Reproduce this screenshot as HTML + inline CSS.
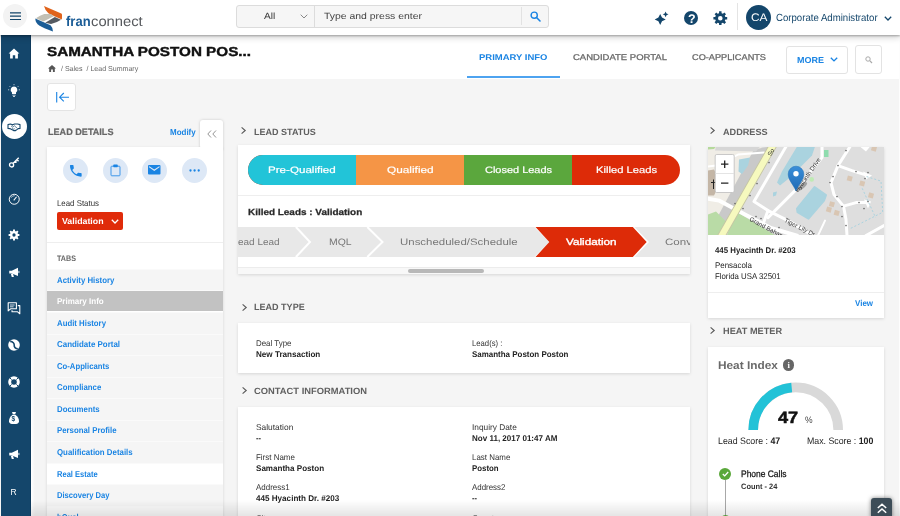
<!DOCTYPE html>
<html lang="en"><head><meta charset="utf-8"><title>Lead Summary</title>
<style>
*{box-sizing:border-box;margin:0;padding:0}
html,body{width:900px;height:516px;overflow:hidden;background:#f5f5f5;font-family:"Liberation Sans",sans-serif}
#app{position:relative;width:900px;height:516px;overflow:hidden;background:transparent;will-change:transform}
.a{position:absolute}
.t{position:absolute;white-space:nowrap;line-height:1;transform-origin:0 50%;display:block}
.card{position:absolute;background:#fff;box-shadow:0 1px 3px rgba(0,0,0,.13)}
svg{position:absolute;overflow:visible}
.circ{position:absolute;width:25px;height:25px;border-radius:50%;background:#dde8f6}
.li{position:absolute;left:47px;width:176px;height:21px;background:#f5f5f5;border-top:1px solid #fafafa}
</style></head>
<body><div id="app">
<div class="a" style="left:0;top:0;width:900px;height:35px;background:#fff;box-shadow:0 1px 2px rgba(0,0,0,.3),0 3px 6px rgba(0,0,0,.16);z-index:5"></div><div class="a" id="hdr" style="left:0;top:0;width:900px;height:35px;z-index:6"><div class="a" style="left:3px;top:4.2px;width:24px;height:24px;border-radius:50%;background:#f3f3f3"></div><svg style="left:9.7px;top:12.3px" width="12" height="9" viewBox="0 0 12 9"><path d="M0 .9H11M0 4.2H11M0 7.5H11" stroke="#14466b" stroke-width="1.2" fill="none"/></svg><svg style="left:34px;top:5px" width="30" height="28" viewBox="0 0 30 28">
<path d="M9.95 1L27.3 8.6Q28 9 28 10L27.95 14.4Q20 11.5 14.4 8.3Q11.3 5.8 9.95 1z" fill="#e0631b"/>
<path d="M1.9 13.25Q6 10.5 10.25 9.1L16.8 9.1L19.9 11.15L9.35 16.5z" fill="#c3c0b4"/>
<path d="M20.8 11.9L27 14.7Q23 17.5 17.1 19L11.2 17.8z" fill="#555a61"/>
<path d="M1.25 13.45L16.5 20.25Q18.5 22 18.95 26.45Q9 23 5.3 20.55Q1.5 18 1.25 13.45z" fill="#1a5c96"/>
</svg><span class="t" style="left:66.2px;top:13.66px;font-size:14px;color:#1a5c96;font-weight:700;transform:scaleX(0.9299) rotate(.03deg);">fran</span><span class="t" style="left:91.3px;top:13.66px;font-size:14px;color:#55585c;transform:scaleX(1.0541) rotate(.03deg);">connect</span><div class="a" style="left:235.5px;top:4.5px;width:313.5px;height:23px;border:1px solid #dcdcdc;border-radius:3px;background:#f6f6f6"></div><div class="a" style="left:313.5px;top:5px;width:1px;height:22px;background:#dcdcdc"></div><div class="a" style="left:520.5px;top:7px;width:1px;height:18px;background:#e2e2e2"></div><span class="t" style="left:264px;top:12.12px;font-size:9px;color:#333;transform:scaleX(1.1282) rotate(.03deg);">All</span><svg style="left:300px;top:14px" width="8" height="5" viewBox="0 0 8 5"><path d="M.7 .7L4 4L7.3 .7" stroke="#888" stroke-width="1" fill="none"/></svg><span class="t" style="left:324px;top:12.12px;font-size:9px;color:#444;transform:scaleX(1.1589) rotate(.03deg);">Type and press enter</span><svg style="left:529.5px;top:10.5px" width="11" height="11" viewBox="0 0 11 11"><circle cx="4.2" cy="4.2" r="3.1" stroke="#1a84e3" stroke-width="1.4" fill="none"/><path d="M6.5 6.5L10 10" stroke="#1a84e3" stroke-width="1.6" stroke-linecap="round"/></svg><svg style="left:655px;top:11px" width="14" height="14" viewBox="0 0 14 14"><path d="M5.2 2.9L7 6.6L10.7 8.4L7 10.2L5.2 13.9L3.4 10.2L-.3 8.4L3.4 6.6z" fill="#14466b"/><path d="M10.6 .4L11.5 2.4L13.5 3.3L11.5 4.2L10.6 6.2L9.7 4.2L7.7 3.3L9.7 2.4z" fill="#14466b"/></svg><div class="a" style="left:684.4px;top:11.2px;width:14px;height:14px;border-radius:50%;background:#14466b"></div><span class="t" style="left:687.9px;top:12.55px;font-size:12.5px;color:#fff;font-weight:700;transform:scaleX(1.0000) rotate(.03deg);">?</span><svg style="left:713px;top:11px" width="15" height="15" viewBox="0 0 15 15"><path d="M14.20 6.00 L14.20 8.40 L12.34 8.49 L11.78 9.85 L13.03 11.23 L11.33 12.93 L9.95 11.68 L8.59 12.24 L8.50 14.10 L6.10 14.10 L6.01 12.24 L4.65 11.68 L3.27 12.93 L1.57 11.23 L2.82 9.85 L2.26 8.49 L0.40 8.40 L0.40 6.00 L2.26 5.91 L2.82 4.55 L1.57 3.17 L3.27 1.47 L4.65 2.72 L6.01 2.16 L6.10 0.30 L8.50 0.30 L8.59 2.16 L9.95 2.72 L11.33 1.47 L13.03 3.17 L11.78 4.55 L12.34 5.91z M9.60 7.20 A2.3 2.3 0 1 0 5.00 7.20 A2.3 2.3 0 1 0 9.60 7.20z" fill="#14466b" fill-rule="evenodd"/></svg><div class="a" style="left:737px;top:3px;width:1px;height:27px;background:#e4e4e4"></div><div class="a" style="left:745.8px;top:4.6px;width:25.4px;height:25.4px;border-radius:50%;background:#14466b"></div><span class="t" style="left:750.5px;top:12.25px;font-size:11px;color:#fff;transform:scaleX(1.0798) rotate(.03deg);">CA</span><span class="t" style="left:776px;top:12.80px;font-size:10.3px;color:#14466b;transform:scaleX(0.9343) rotate(.03deg);">Corporate Administrator</span><svg style="left:884px;top:16px" width="8" height="5" viewBox="0 0 8 5"><path d="M.8 .8L4 4L7.2 .8" stroke="#14466b" stroke-width="1.3" fill="none"/></svg></div><div class="a" style="left:1px;top:35px;width:30px;height:481px;background:#14466b;border-right:1px solid #0f3a5c;z-index:3"></div><div class="a" style="left:31px;top:78px;width:4px;height:438px;background:linear-gradient(to right,#fff,rgba(255,255,255,0));z-index:2"></div><div class="a" id="side" style="left:0;top:0;width:31px;height:516px;z-index:4"><svg style="left:6.9px;top:46.5px" width="14" height="14" viewBox="0 0 14 14"><path d="M7 1.6L12.4 6.6H10.9V11.6H8.2V8.2H5.8V11.6H3.1V6.6H1.6z" fill="#fff"/></svg><svg style="left:6.9px;top:83.5px" width="14" height="14" viewBox="0 0 14 14"><path d="M7 2.4a3.4 3.4 0 0 1 2 6.1V10H5V8.5a3.4 3.4 0 0 1 2-6.1zM5.4 10.7H8.6V11.6H5.4zM6 12.2H8V12.9H6z" fill="#fff"/><path d="M7 .2V1.2M2.6 2.2L3.3 2.9M11.4 2.2L10.7 2.9M1.2 5.8H2.2M12.8 5.8H11.8" stroke="#fff" stroke-width=".8"/></svg><div class="a" style="left:1.6px;top:113.7px;width:25.2px;height:25.2px;border-radius:50%;background:#fff"></div><svg style="left:6.9px;top:119.5px" width="14" height="14" viewBox="0 0 14 14"><path d="M1 4.6L3.4 4L5.6 4.8L7.6 4L10.6 4L13 4.6V8.4L11.2 8.6L8.6 10.6L6.6 10.6L2.800 8.6L1 8.4z" fill="none" stroke="#14466b" stroke-width="1.1" stroke-linejoin="round"/><path d="M5.600 4.8L4.600 6.6L5.800 7.2L7.400 5.8L10.400 8.4M6.800 8.2L8.200 9.6M5.200 8.2L6.600 9.8" stroke="#14466b" stroke-width=".65" fill="none"/></svg><svg style="left:7.7px;top:156.2px" width="12.5" height="12.5" viewBox="0 0 14 14"><circle cx="4" cy="10" r="2.3" stroke="#fff" stroke-width="1.5" fill="none"/><path d="M5.6 8.4L12 2M10 4L11.8 5.8M8.2 5.8L9.6 7.2" stroke="#fff" stroke-width="1.5" fill="none"/></svg><svg style="left:7.7px;top:192.8px" width="12.5" height="12.5" viewBox="0 0 14 14"><circle cx="7" cy="7" r="5.6" stroke="#fff" stroke-width="1.1" fill="none"/><path d="M6.4 8.2L9.6 4.2" stroke="#fff" stroke-width="1.2"/><path d="M3.4 5.4A4 4 0 0 1 7.6 3" stroke="#fff" stroke-width=".7" fill="none"/></svg><svg style="left:7.9px;top:229.3px" width="12" height="12" viewBox="0 0 14 14"><path d="M13.30 5.90 L13.30 8.10 L11.65 8.19 L11.13 9.44 L12.24 10.68 L10.68 12.24 L9.44 11.13 L8.19 11.65 L8.10 13.30 L5.90 13.30 L5.81 11.65 L4.56 11.13 L3.32 12.24 L1.76 10.68 L2.87 9.44 L2.35 8.19 L0.70 8.10 L0.70 5.90 L2.35 5.81 L2.87 4.56 L1.76 3.32 L3.32 1.76 L4.56 2.87 L5.81 2.35 L5.90 0.70 L8.10 0.70 L8.19 2.35 L9.44 2.87 L10.68 1.76 L12.24 3.32 L11.13 4.56 L11.65 5.81z M8.90 7.00 A1.9 1.9 0 1 0 5.10 7.00 A1.9 1.9 0 1 0 8.90 7.00z" fill="#fff" fill-rule="evenodd"/></svg><svg style="left:7.7px;top:266.1px" width="12.5" height="12.5" viewBox="0 0 14 14"><path d="M1.4 5.2H4.2L11.2 2V11.2L4.2 8.4H1.4z" fill="#fff"/><path d="M3.2 8.6H5.6L6.6 12.2H4.2z" fill="#fff"/><path d="M12.2 5.4V8" stroke="#fff" stroke-width="1"/></svg><svg style="left:6.9px;top:301.0px" width="14" height="14" viewBox="0 0 14 14"><path d="M1.2 1.8H9.4V7.8H3.6L1.2 9.8z" fill="none" stroke="#fff" stroke-width="1.1" stroke-linejoin="round"/><path d="M10.8 4.6H12.8V12.8L10.6 10.8H5V9.2" fill="none" stroke="#fff" stroke-width="1.1" stroke-linejoin="round"/><path d="M3 4H7.6M3 5.8H6.6" stroke="#fff" stroke-width=".8"/></svg><svg style="left:6.9px;top:338.1px" width="14" height="14" viewBox="0 0 14 14"><circle cx="7" cy="7" r="5.8" fill="#fff"/><path d="M3.2 3.4C6 3.6 7.4 5.6 7.2 7.2C7 9 8.4 10.6 10.8 10.8" stroke="#14466b" stroke-width="1.6" fill="none"/></svg><svg style="left:6.9px;top:374.5px" width="14" height="14" viewBox="0 0 14 14"><circle cx="7" cy="7" r="4.3" stroke="#fff" stroke-width="3" fill="none"/><path d="M2.6 2.6L4.6 4.6M11.4 2.6L9.4 4.6M2.6 11.4L4.6 9.4M11.4 11.4L9.4 9.4" stroke="#14466b" stroke-width="1"/></svg><svg style="left:6.9px;top:410.6px" width="14" height="14" viewBox="0 0 14 14"><path d="M5 1H9L8.2 3.2H5.8z" fill="#fff"/><path d="M5.6 3.8H8.4C11 5.6 12 8 12 10.2C12 12.2 10.4 13 7 13C3.6 13 2 12.2 2 10.2C2 8 3 5.6 5.6 3.8z" fill="#fff"/></svg><span class="t" style="left:11.6px;top:416px;font-size:6.5px;font-weight:700;color:#14466b">$</span><svg style="left:7.7px;top:448.1px" width="12.5" height="12.5" viewBox="0 0 14 14"><path d="M1.4 5.2H4.2L11.2 2V11.2L4.2 8.4H1.4z" fill="#fff"/><path d="M3.2 8.6H5.6L6.6 12.2H4.2z" fill="#fff"/><path d="M12.2 5.4V8" stroke="#fff" stroke-width="1"/></svg><span class="t" style="left:10.6px;top:488px;font-size:8.5px;color:#fff">R</span></div><div class="a" style="left:31px;top:35px;width:869px;height:43.5px;background:#fff"></div><span class="t" style="left:47.3px;top:44.91px;font-size:13px;color:#111;font-weight:700;transform:scaleX(1.1719) rotate(.03deg);-webkit-text-stroke:.4px #111;">SAMANTHA POSTON POS...</span><svg style="left:48px;top:64.5px" width="8" height="7" viewBox="0 0 8 7"><path d="M4 0L8 3.6H6.8V7H4.9V4.6H3.1V7H1.2V3.6H0z" fill="#555"/></svg><span class="t" style="left:60.6px;top:65.40px;font-size:7.2px;color:#666;transform:scaleX(0.9809) rotate(.03deg);">/ Sales&nbsp; / Lead Summary</span><span class="t" style="left:479px;top:53.37px;font-size:8.4px;color:#1a84e3;font-weight:700;transform:scaleX(1.1322) rotate(.03deg);">PRIMARY INFO</span><div class="a" style="left:466.5px;top:76px;width:93.5px;height:2.2px;background:#4da3f0"></div><span class="t" style="left:572.5px;top:53.37px;font-size:8.4px;color:#666;transform:scaleX(1.1347) rotate(.03deg);-webkit-text-stroke:.25px #666;">CANDIDATE PORTAL</span><span class="t" style="left:692px;top:53.37px;font-size:8.4px;color:#666;transform:scaleX(1.0966) rotate(.03deg);-webkit-text-stroke:.25px #666;">CO-APPLICANTS</span><div class="a" style="left:786px;top:46px;width:62px;height:27.5px;border:1px solid #e3e3e3;border-radius:3px;background:#fff"></div><span class="t" style="left:797px;top:55.60px;font-size:8.6px;color:#1a84e3;font-weight:700;transform:scaleX(1.0473) rotate(.03deg);">MORE</span><svg style="left:830px;top:57.3px" width="8" height="5" viewBox="0 0 8 5"><path d="M.8 .8L4 3.9L7.2 .8" stroke="#1a84e3" stroke-width="1.4" fill="none"/></svg><div class="a" style="left:855px;top:45px;width:26.5px;height:28.5px;border:1px solid #e3e3e3;border-radius:3px;background:#fff"></div><svg style="left:864.5px;top:55.5px" width="8" height="8" viewBox="0 0 8 8"><circle cx="3" cy="3" r="2.2" stroke="#aaa" stroke-width="1" fill="none"/><path d="M4.7 4.7L7 7" stroke="#aaa" stroke-width="1.2"/></svg><div class="a" style="left:47px;top:83px;width:28.5px;height:28px;border:1px solid #e4e4e4;border-radius:3px;background:#fff"></div><svg style="left:55.5px;top:92px" width="14" height="11" viewBox="0 0 14 11"><path d="M.7 0V10.4M3.6 5.2H13M7.8 1L3.6 5.2L7.8 9.4" stroke="#1a84e3" stroke-width="1.1" fill="none"/></svg><div class="a" style="left:899px;top:36px;width:1px;height:480px;background:#fdfdfd"></div><span class="t" style="left:47.5px;top:128.06px;font-size:9.3px;color:#666;font-weight:700;transform:scaleX(0.9778) rotate(.03deg);-webkit-text-stroke:.2px #666;">LEAD DETAILS</span><span class="t" style="left:169.5px;top:128.00px;font-size:8.6px;color:#1a84e3;font-weight:700;transform:scaleX(0.9282) rotate(.03deg);">Modify</span><div class="a" style="left:200px;top:120px;width:23px;height:30px;background:#fff;border-radius:3px 3px 0 0;box-shadow:0 0 3px rgba(0,0,0,.18)"></div><div class="card" style="left:47px;top:147.3px;width:176px;height:380px"></div><div class="a" style="left:200.5px;top:145px;width:22.5px;height:6px;background:#fff"></div><svg style="left:206.5px;top:129.5px" width="10" height="8" viewBox="0 0 10 8"><path d="M4 .5L.8 4L4 7.5M9 .5L5.8 4L9 7.5" stroke="#888" stroke-width=".9" fill="none"/></svg><div class="circ" style="left:63.0px;top:157.7px"></div><div class="circ" style="left:102.7px;top:157.7px"></div><div class="circ" style="left:142.3px;top:157.7px"></div><div class="circ" style="left:182.0px;top:157.7px"></div><svg style="left:67.5px;top:162.5px" width="15.6" height="15.6" viewBox="0 0 24 24"><path d="M6.62 10.79c1.44 2.83 3.76 5.14 6.59 6.59l2.2-2.2c.27-.27.67-.36 1.02-.24 1.12.37 2.33.57 3.57.57.55 0 1 .45 1 1V20c0 .55-.45 1-1 1-9.39 0-17-7.61-17-17 0-.55.45-1 1-1h3.5c.55 0 1 .45 1 1 0 1.25.2 2.45.57 3.57.11.35.03.74-.25 1.02l-2.2 2.2z" fill="#1a84e3"/></svg><svg style="left:109.7px;top:164px" width="11" height="12.5" viewBox="0 0 11 12.5"><rect x="1" y="2.2" width="9" height="9.6" rx=".8" fill="none" stroke="#3d96ea" stroke-width="1"/><rect x="3.3" y=".6" width="4.4" height="2.6" rx=".6" fill="#1a84e3"/></svg><svg style="left:148.4px;top:165.2px" width="12.5" height="9.6" viewBox="0 0 12.5 9.6"><rect x="0" y="0" width="12.5" height="9.6" rx="1" fill="#1a84e3"/><path d="M1 1.6L6.25 5.3L11.5 1.6" stroke="#dde8f6" stroke-width="1.1" fill="none"/></svg><svg style="left:188.5px;top:168.8px" width="12" height="3" viewBox="0 0 12 3"><circle cx="1.5" cy="1.5" r="1.15" fill="#1a84e3"/><circle cx="5.6" cy="1.5" r="1.15" fill="#1a84e3"/><circle cx="9.7" cy="1.5" r="1.15" fill="#1a84e3"/></svg><span class="t" style="left:57.3px;top:199.17px;font-size:8.3px;color:#333;transform:scaleX(0.9481) rotate(.03deg);">Lead Status</span><div class="a" style="left:57.3px;top:212.2px;width:65.6px;height:17.5px;background:#e02b0a;border-radius:2px"></div><span class="t" style="left:62px;top:217.00px;font-size:8.6px;color:#fff;font-weight:700;transform:scaleX(1.0223) rotate(.03deg);">Validation</span><svg style="left:110.8px;top:218.6px" width="8" height="5" viewBox="0 0 8 5"><path d="M.8 .8L4 4L7.2 .8" stroke="#fff" stroke-width="1.3" fill="none"/></svg><div class="a" style="left:47px;top:242px;width:176px;height:1px;background:#eee"></div><span class="t" style="left:57.3px;top:254.95px;font-size:8px;color:#666;font-weight:700;transform:scaleX(0.8920) rotate(.03deg);">TABS</span><div class="li" style="top:268.90px;height:21.55px;background:#f5f5f5"></div><span class="t" style="left:57.3px;top:275.59px;font-size:8.5px;color:#1a84e3;font-weight:700;transform:scaleX(0.9205) rotate(.03deg);">Activity History</span><div class="li" style="top:290.45px;height:20.75px;background:#c2c2c2"></div><span class="t" style="left:57.3px;top:297.14px;font-size:8.5px;color:#fff;font-weight:700;transform:scaleX(0.9414) rotate(.03deg);">Primary Info</span><div class="li" style="top:312.00px;height:21.55px;background:#f5f5f5"></div><span class="t" style="left:57.3px;top:318.69px;font-size:8.5px;color:#1a84e3;font-weight:700;transform:scaleX(0.9180) rotate(.03deg);">Audit History</span><div class="li" style="top:333.55px;height:21.55px;background:#f5f5f5"></div><span class="t" style="left:57.3px;top:340.24px;font-size:8.5px;color:#1a84e3;font-weight:700;transform:scaleX(0.9327) rotate(.03deg);">Candidate Portal</span><div class="li" style="top:355.10px;height:21.55px;background:#f5f5f5"></div><span class="t" style="left:57.3px;top:361.79px;font-size:8.5px;color:#1a84e3;font-weight:700;transform:scaleX(0.9076) rotate(.03deg);">Co-Applicants</span><div class="li" style="top:376.65px;height:21.55px;background:#f5f5f5"></div><span class="t" style="left:57.3px;top:383.34px;font-size:8.5px;color:#1a84e3;font-weight:700;transform:scaleX(0.9193) rotate(.03deg);">Compliance</span><div class="li" style="top:398.20px;height:21.55px;background:#f5f5f5"></div><span class="t" style="left:57.3px;top:404.89px;font-size:8.5px;color:#1a84e3;font-weight:700;transform:scaleX(0.9223) rotate(.03deg);">Documents</span><div class="li" style="top:419.75px;height:21.55px;background:#f5f5f5"></div><span class="t" style="left:57.3px;top:426.44px;font-size:8.5px;color:#1a84e3;font-weight:700;transform:scaleX(0.9194) rotate(.03deg);">Personal Profile</span><div class="li" style="top:441.30px;height:21.55px;background:#f5f5f5"></div><span class="t" style="left:57.3px;top:447.99px;font-size:8.5px;color:#1a84e3;font-weight:700;transform:scaleX(0.9263) rotate(.03deg);">Qualification Details</span><div class="li" style="top:462.85px;height:21.55px;background:#fff"></div><span class="t" style="left:57.3px;top:469.54px;font-size:8.5px;color:#1a84e3;font-weight:700;transform:scaleX(0.8878) rotate(.03deg);">Real Estate</span><div class="li" style="top:484.40px;height:21.55px;background:#f5f5f5"></div><span class="t" style="left:57.3px;top:491.09px;font-size:8.5px;color:#1a84e3;font-weight:700;transform:scaleX(0.8960) rotate(.03deg);">Discovery Day</span><div class="li" style="top:505.95px;height:21.55px;background:#fbfbfb"></div><span class="t" style="left:57.3px;top:512.64px;font-size:8.5px;color:#1a84e3;font-weight:700;transform:scaleX(0.9006) rotate(.03deg);">bQual</span><svg style="left:240.5px;top:126.9px" width="5" height="7" viewBox="0 0 5 7"><path d="M.6 .4L4.2 3.5L.6 6.6" stroke="#5a5a5a" stroke-width="1.15" fill="none"/></svg><span class="t" style="left:253.5px;top:127.82px;font-size:9px;color:#606060;font-weight:700;transform:scaleX(1.0021) rotate(.03deg);">LEAD STATUS</span><div class="card" style="left:238px;top:145px;width:452px;height:129.2px"></div><div class="a" style="left:248px;top:155px;width:432.3px;height:29.7px;border-radius:15px;overflow:hidden;background:#dd2b08"><div class="a" style="left:0;top:0;width:108.2px;height:30px;background:#22c4d8"></div><div class="a" style="left:108.2px;top:0;width:107.7px;height:30px;background:#f59546"></div><div class="a" style="left:215.9px;top:0;width:108.1px;height:30px;background:#5ba73d"></div></div><span class="t" style="left:267.9px;top:166.46px;font-size:9.3px;color:#fff;transform:scaleX(1.2476) rotate(.03deg);-webkit-text-stroke:.2px #fff;">Pre-Qualified</span><span class="t" style="left:386.5px;top:166.46px;font-size:9.3px;color:#fff;transform:scaleX(1.2724) rotate(.03deg);-webkit-text-stroke:.2px #fff;">Qualified</span><span class="t" style="left:484.5px;top:166.46px;font-size:9.3px;color:#fff;transform:scaleX(1.1783) rotate(.03deg);-webkit-text-stroke:.2px #fff;">Closed Leads</span><span class="t" style="left:595.5px;top:166.46px;font-size:9.3px;color:#fff;transform:scaleX(1.2042) rotate(.03deg);-webkit-text-stroke:.2px #fff;">Killed Leads</span><div class="a" style="left:238px;top:194.8px;width:452px;height:1px;background:#eee"></div><span class="t" style="left:248.1px;top:207.90px;font-size:8.8px;color:#2a2a2a;font-weight:700;transform:scaleX(1.1286) rotate(.03deg);-webkit-text-stroke:.25px #2a2a2a;">Killed Leads : Validation</span><svg style="left:238px;top:227px" width="452" height="30" viewBox="0 0 452 30">
<rect x="0" y="0" width="452" height="30" fill="#e8e8e8"/>
<path d="M57.9 0L72 15L57.9 30M129.3 0L144.5 15L129.3 30" stroke="#fff" stroke-width="2" fill="none"/>
<path d="M295.3 -1L311.3 15L295.3 31L395.5 31L411 15L395.5 -1z" fill="#fff"/>
<path d="M297.5 0L311.3 15L297.5 30L394.8 30L408.7 15L394.8 0z" fill="#dd2b08"/>
</svg><span class="t" style="left:238px;top:238.46px;font-size:9.3px;color:#777;transform:scaleX(1.0727) rotate(.03deg);">ead Lead</span><span class="t" style="left:328.7px;top:238.46px;font-size:9.3px;color:#777;transform:scaleX(1.1212) rotate(.03deg);">MQL</span><span class="t" style="left:399.9px;top:238.46px;font-size:9.3px;color:#777;transform:scaleX(1.2308) rotate(.03deg);">Unscheduled/Schedule</span><span class="t" style="left:565.9px;top:238.46px;font-size:9.3px;color:#fff;transform:scaleX(1.2601) rotate(.03deg);-webkit-text-stroke:.35px #fff;">Validation</span><div class="a" style="left:665px;top:236px;width:25px;height:13px;overflow:hidden"><span class="t" style="left:0px;top:2.46px;font-size:9.3px;color:#777;transform:scaleX(1.2432) rotate(.03deg);">Conv</span></div><div class="a" style="left:238px;top:267.3px;width:452px;height:6.9px;background:#f8f8f8;border-top:1px solid #ececec"></div><div class="a" style="left:407.9px;top:269.4px;width:76.1px;height:4px;border-radius:2px;background:#b8b8b8"></div><svg style="left:241.7px;top:304.0px" width="5" height="7" viewBox="0 0 5 7"><path d="M.6 .4L4.2 3.5L.6 6.6" stroke="#5a5a5a" stroke-width="1.15" fill="none"/></svg><span class="t" style="left:254px;top:302.92px;font-size:9px;color:#606060;font-weight:700;transform:scaleX(1.0036) rotate(.03deg);">LEAD TYPE</span><div class="card" style="left:238px;top:323.3px;width:452px;height:50px"></div><span class="t" style="left:256.4px;top:338.67px;font-size:8.3px;color:#333;transform:scaleX(0.9538) rotate(.03deg);">Deal Type</span><span class="t" style="left:256.4px;top:350.07px;font-size:8.3px;color:#222;font-weight:700;transform:scaleX(0.9752) rotate(.03deg);">New Transaction</span><span class="t" style="left:471.8px;top:338.67px;font-size:8.3px;color:#333;transform:scaleX(0.9282) rotate(.03deg);">Lead(s) :</span><span class="t" style="left:471.8px;top:350.07px;font-size:8.3px;color:#222;font-weight:700;transform:scaleX(0.9592) rotate(.03deg);">Samantha Poston Poston</span><svg style="left:241.7px;top:386.9px" width="5" height="7" viewBox="0 0 5 7"><path d="M.6 .4L4.2 3.5L.6 6.6" stroke="#5a5a5a" stroke-width="1.15" fill="none"/></svg><span class="t" style="left:254px;top:386.52px;font-size:9px;color:#606060;font-weight:700;transform:scaleX(1.0400) rotate(.03deg);">CONTACT INFORMATION</span><div class="card" style="left:238px;top:406.8px;width:452px;height:120px"></div><span class="t" style="left:256.4px;top:422.67px;font-size:8.3px;color:#333;transform:scaleX(1.0107) rotate(.03deg);">Salutation</span><span class="t" style="left:256.4px;top:434.07px;font-size:8.3px;color:#222;font-weight:700;transform:scaleX(0.9040) rotate(.03deg);">--</span><span class="t" style="left:471.8px;top:422.67px;font-size:8.3px;color:#333;transform:scaleX(1.0015) rotate(.03deg);">Inquiry Date</span><span class="t" style="left:471.8px;top:434.07px;font-size:8.3px;color:#222;font-weight:700;transform:scaleX(0.9677) rotate(.03deg);">Nov 11, 2017 01:47 AM</span><span class="t" style="left:256.4px;top:452.97px;font-size:8.3px;color:#333;transform:scaleX(0.9586) rotate(.03deg);">First Name</span><span class="t" style="left:256.4px;top:464.37px;font-size:8.3px;color:#222;font-weight:700;transform:scaleX(0.9718) rotate(.03deg);">Samantha Poston</span><span class="t" style="left:471.8px;top:452.97px;font-size:8.3px;color:#333;transform:scaleX(0.9545) rotate(.03deg);">Last Name</span><span class="t" style="left:471.8px;top:464.37px;font-size:8.3px;color:#222;font-weight:700;transform:scaleX(0.9458) rotate(.03deg);">Poston</span><span class="t" style="left:256.4px;top:482.97px;font-size:8.3px;color:#333;transform:scaleX(0.9583) rotate(.03deg);">Address1</span><span class="t" style="left:256.4px;top:494.37px;font-size:8.3px;color:#222;font-weight:700;transform:scaleX(0.9762) rotate(.03deg);">445 Hyacinth Dr. #203</span><span class="t" style="left:471.8px;top:482.97px;font-size:8.3px;color:#333;transform:scaleX(0.9526) rotate(.03deg);">Address2</span><span class="t" style="left:471.8px;top:494.37px;font-size:8.3px;color:#222;font-weight:700;transform:scaleX(0.9040) rotate(.03deg);">--</span><span class="t" style="left:256.4px;top:513.87px;font-size:8.3px;color:#333;transform:scaleX(0.9443) rotate(.03deg);">City</span><span class="t" style="left:256.4px;top:525.27px;font-size:8.3px;color:#222;font-weight:700;transform:scaleX(0.9254) rotate(.03deg);">Pensacola</span><span class="t" style="left:471.8px;top:513.87px;font-size:8.3px;color:#333;transform:scaleX(0.9978) rotate(.03deg);">Country</span><span class="t" style="left:471.8px;top:525.27px;font-size:8.3px;color:#222;font-weight:700;transform:scaleX(0.9127) rotate(.03deg);">USA</span><svg style="left:710.1px;top:126.9px" width="5" height="7" viewBox="0 0 5 7"><path d="M.6 .4L4.2 3.5L.6 6.6" stroke="#5a5a5a" stroke-width="1.15" fill="none"/></svg><span class="t" style="left:722.8px;top:127.52px;font-size:9px;color:#606060;font-weight:700;transform:scaleX(1.0133) rotate(.03deg);">ADDRESS</span><div class="card" style="left:708px;top:147.3px;width:176px;height:170.7px"></div><svg style="left:708px;top:147.4px;overflow:hidden" width="176" height="88" viewBox="0 0 176 88"><defs><linearGradient id="pg" x1="0" y1="0" x2="0" y2="1"><stop offset="0" stop-color="#3a8fd9"/><stop offset="1" stop-color="#1f69b4"/></linearGradient></defs><rect x="0" y="0" width="176" height="88" fill="#dedede"/><path d="M0 -0.4L54 -0.4L8 78.6L0 84.6z" fill="#f0ede6"/><path d="M46 2.6L61 -0.4L17 78.6L6 76.6z" fill="#c9c9c9"/><path d="M0 -0.4L8 -0.4L6 2.1L0 2.6z" fill="#b5d99c"/><path d="M8 -0.4L52 -0.4L48 4.6L7 3.6z" fill="#d6d6d6"/><path d="M0 67.6L8 64.6L18 74.6L11 88.1L0 88.1z" fill="#b9dba6"/><path d="M28 64.6L67 88.1L19 88.1z" fill="#b9dba6"/><path d="M0 23.6L6 22.6L9 28.6L9 42.6L6 48.6L0 48.6z" fill="#c4b6a6"/><path d="M31 12.6L42 10.6L40 18.6L34 27.1L30.5 24.6z" fill="#aad3df"/><path d="M89 -0.4L107 -0.4L104 8.6L82 30.6L72 38.6L69 35.6L74 24.6z" fill="#aad3df"/><path d="M106.5 40.1L118 48.1L116 53.6L100.5 71.6L89.5 65.1L89 61.6z" fill="#aad3df" stroke="#aad3df" stroke-width="2" stroke-linejoin="round"/><path d="M65 45.6L69 44.6L68 48.6L65 49.6z" fill="#aad3df"/><path d="M0 19.6L8 18.6L30 7.6L56 5.6" fill="none" stroke="#fff" stroke-width="2" stroke-linejoin="round" stroke-linecap="round"/><path d="M0 51.6L11 53.6L37 67.6L62 80.6L89 88.6" fill="none" stroke="#fff" stroke-width="4" stroke-linejoin="round" stroke-linecap="round"/><path d="M78 -0.4L46 54.6L60 63.6L82 74.6L105 88.6" fill="none" stroke="#fff" stroke-width="3" stroke-linejoin="round" stroke-linecap="round"/><path d="M114 -0.4L114 10.6L104 22.6L88 42.6L60 70.6" fill="none" stroke="#fff" stroke-width="3" stroke-linejoin="round" stroke-linecap="round"/><path d="M60 63.6L56 74.6" fill="none" stroke="#fff" stroke-width="3" stroke-linejoin="round" stroke-linecap="round"/><path d="M117 73.6L110 88.6" fill="none" stroke="#fff" stroke-width="2" stroke-linejoin="round" stroke-linecap="round"/><path d="M142 -0.4L130 18.6L123 35.6L126 47.6L135.5 59.1L138 72.6L139 88.6" fill="none" stroke="#fff" stroke-width="3" stroke-linejoin="round" stroke-linecap="round"/><path d="M130 18.6L144 23.6L160 28.6" fill="none" stroke="#fff" stroke-width="3" stroke-linejoin="round" stroke-linecap="round"/><path d="M155 24.6L164 28.6L158 32.6z" fill="#fff"/><path d="M135.5 59.1L148 55.6L160 55.6" fill="none" stroke="#fff" stroke-width="3" stroke-linejoin="round" stroke-linecap="round"/><path d="M156 52.6L163 54.6L160 61.6z" fill="#fff"/><path d="M158 88.6L176 78.6" fill="none" stroke="#fff" stroke-width="3" stroke-linejoin="round" stroke-linecap="round"/><path d="M152 -0.4L162 -0.4L158 4.6z" fill="#fff"/><path d="M65.5 -2.4L12.5 90.6" fill="none" stroke="#c6c6a4" stroke-width="8" stroke-linejoin="round" stroke-linecap="round"/><path d="M65.5 -2.4L12.5 90.6" fill="none" stroke="#f6f9be" stroke-width="6.2" stroke-linejoin="round" stroke-linecap="round"/><rect x="139.2" y="29" width="5" height="5" fill="#d9c6b3" transform="rotate(15 141.7 31.5)"/><rect x="151.7" y="34" width="5" height="5" fill="#d9c6b3" transform="rotate(15 154.2 36.5)"/><rect x="160.5" y="45.9" width="5" height="5" fill="#d9c6b3" transform="rotate(15 163 48.4)"/><rect x="121.4" y="54.8" width="5" height="5" fill="#d9c6b3" transform="rotate(15 123.9 57.3)"/><rect x="126.2" y="63.4" width="5" height="5" fill="#d9c6b3" transform="rotate(15 128.7 65.9)"/><rect x="118.4" y="60.1" width="5" height="5" fill="#d9c6b3" transform="rotate(15 120.9 62.6)"/><rect x="163.5" y="-0.9" width="5" height="5" fill="#d9c6b3" transform="rotate(15 166 1.6)"/><path d="M158.6 29.6L173 34.1L174.7 65.3L142.6 81.4" fill="none" stroke="#aad3df" stroke-width="1" stroke-dasharray="2 2"/><path d="M154.2 41.3L167.6 70.6" fill="none" stroke="#aad3df" stroke-width="1" stroke-dasharray="2 2"/><rect x="116" y="3" width="4.5" height="7" fill="#8fdcae"/><circle cx="103.7" cy="32.4" r="2.3" fill="#bfeab4"/><circle cx="61" cy="15.6" r=".8" fill="#666"/><circle cx="49" cy="36.6" r=".8" fill="#666"/><circle cx="42" cy="48.6" r=".8" fill="#666"/><circle cx="27" cy="56.6" r=".8" fill="#666"/><circle cx="35" cy="61.6" r=".8" fill="#666"/><circle cx="48" cy="69.6" r=".8" fill="#666"/><circle cx="53" cy="71.6" r=".8" fill="#666"/><circle cx="138" cy="3.6" r=".8" fill="#666"/><circle cx="130" cy="18.6" r=".8" fill="#666"/><circle cx="125" cy="29.6" r=".8" fill="#666"/><circle cx="122" cy="35.6" r=".8" fill="#666"/><circle cx="129" cy="49.6" r=".8" fill="#666"/><circle cx="134" cy="59.6" r=".8" fill="#666"/><circle cx="134" cy="69.6" r=".8" fill="#666"/><circle cx="138" cy="78.6" r=".8" fill="#666"/><circle cx="148" cy="24.6" r=".8" fill="#666"/><circle cx="160" cy="25.6" r=".8" fill="#666"/><circle cx="157" cy="31.6" r=".8" fill="#666"/><circle cx="151" cy="55.6" r=".8" fill="#666"/><circle cx="160" cy="54.6" r=".8" fill="#666"/><circle cx="156" cy="61.6" r=".8" fill="#666"/><circle cx="71" cy="80.6" r=".8" fill="#666"/><text x="90" y="45.6" font-size="6.2" fill="#333" font-family="Liberation Sans, sans-serif" transform="rotate(-55 90 45.6)">Hyacinth Drive</text><text x="76" y="74.6" font-size="6.2" fill="#333" font-family="Liberation Sans, sans-serif" transform="rotate(27 76 74.6)">Tiger Lily Dr</text><text x="41" y="73.6" font-size="6.2" fill="#333" font-family="Liberation Sans, sans-serif" transform="rotate(28 41 73.6)">Grand Bahama</text><text x="63" y="9.6" font-size="6.2" fill="#333" font-family="Liberation Sans, sans-serif" transform="rotate(-62 63 9.6)">So</text><path d="M5.5 32.5V42M3 35.5H8" stroke="#222" stroke-width="1"/><rect x="7.2" y="7.5" width="19" height="38" rx="1.5" fill="#fff" stroke="#bdbdbd" stroke-width=".8"/><path d="M7.2 26.5H26.2" stroke="#ddd" stroke-width=".8"/><path d="M13 17.2H20.4M16.7 13.5V20.9M13 36.2H20.4" stroke="#222" stroke-width="1.3"/><ellipse cx="93.5" cy="40" rx="7" ry="2.2" fill="rgba(0,0,0,.28)" transform="rotate(-38 93.5 40)"/><path d="M88 44C85 37 80.2 33 80.2 27A7.8 7.8 0 0 1 95.8 27C95.8 33 91 37 88 44z" fill="url(#pg)" stroke="#1f6fb5" stroke-width=".5"/><circle cx="88" cy="26.7" r="2.7" fill="#fff"/></svg><span class="t" style="left:715.3px;top:245.97px;font-size:8.3px;color:#222;font-weight:700;transform:scaleX(0.9458) rotate(.03deg);">445 Hyacinth Dr. #203</span><span class="t" style="left:715.3px;top:261.17px;font-size:8.3px;color:#222;transform:scaleX(0.9548) rotate(.03deg);">Pensacola</span><span class="t" style="left:715.3px;top:272.17px;font-size:8.3px;color:#222;transform:scaleX(0.9432) rotate(.03deg);">Florida USA 32501</span><div class="a" style="left:708px;top:292px;width:176px;height:1px;background:#eee"></div><span class="t" style="left:855.3px;top:298.89px;font-size:8.5px;color:#1a84e3;font-weight:700;transform:scaleX(0.9366) rotate(.03deg);">View</span><svg style="left:710.1px;top:326.7px" width="5" height="7" viewBox="0 0 5 7"><path d="M.6 .4L4.2 3.5L.6 6.6" stroke="#5a5a5a" stroke-width="1.15" fill="none"/></svg><span class="t" style="left:722.8px;top:327.32px;font-size:9px;color:#606060;font-weight:700;transform:scaleX(1.0217) rotate(.03deg);">HEAT METER</span><div class="card" style="left:708px;top:347.2px;width:176px;height:180px"></div><span class="t" style="left:718.2px;top:359.59px;font-size:11.2px;color:#6a6a6a;font-weight:700;transform:scaleX(1.0569) rotate(.03deg);">Heat Index</span><div class="a" style="left:783.3px;top:359.4px;width:11.2px;height:11.2px;border-radius:50%;background:#666"></div><span class="t" style="left:787.4px;top:360.6px;font-size:8.5px;font-weight:700;color:#fff;font-family:'Liberation Serif',serif">i</span><svg style="left:0;top:0" width="900" height="516" viewBox="0 0 900 516"><path d="M753.2 429.9A42.5 42.5 0 0 1 838.2 429.9" stroke="#d9d9d9" stroke-width="9.6" fill="none"/><path d="M753.2 429.9A42.5 42.5 0 0 1 791.70 387.59" stroke="#22c2d7" stroke-width="9.6" fill="none"/></svg><span class="t" style="left:778.2px;top:408.80px;font-size:16.5px;color:#111;font-weight:700;transform:scaleX(1.1003) rotate(.03deg);-webkit-text-stroke:.5px #111;">47</span><span class="t" style="left:805.3px;top:416.26px;font-size:9.3px;color:#444;transform:scaleX(0.9177) rotate(.03deg);">%</span><span class="t" style="left:718.2px;top:436.24px;font-size:9.4px;color:#222;transform:scaleX(0.9395) rotate(.03deg);">Lead Score : <b>47</b></span><span class="t" style="left:806.7px;top:436.24px;font-size:9.4px;color:#222;transform:scaleX(0.9367) rotate(.03deg);">Max. Score : <b>100</b></span><div class="a" style="left:724.6px;top:480px;width:1px;height:40px;background:#a8a8a8"></div><div class="a" style="left:718.7px;top:467.6px;width:12.8px;height:12.8px;border-radius:50%;background:#5aa83a"></div><svg style="left:721.6px;top:471.2px" width="7" height="6" viewBox="0 0 7 6"><path d="M.8 3L2.7 4.9L6.2 1" stroke="#fff" stroke-width="1.3" fill="none"/></svg><div class="a" style="left:719.5px;top:514.5px;width:11px;height:11px;border-radius:50%;background:#5aa83a"></div><span class="t" style="left:740.7px;top:469.14px;font-size:9.4px;color:#111;transform:scaleX(0.8999) rotate(.03deg);-webkit-text-stroke:.25px #111;">Phone Calls</span><span class="t" style="left:740.7px;top:483.02px;font-size:7.8px;color:#333;font-weight:700;transform:scaleX(0.9548) rotate(.03deg);">Count - 24</span><div class="a" style="left:31px;top:500px;width:869px;height:16px;background:linear-gradient(to bottom,rgba(0,0,0,0),rgba(0,0,0,.1));z-index:8"></div><div class="a" style="left:871px;top:498px;width:21px;height:20px;background:#3d4d58;border-radius:3px 3px 0 0;box-shadow:0 0 4px rgba(0,0,0,.5);z-index:9"></div><svg style="left:877px;top:502.5px;z-index:10" width="10" height="11" viewBox="0 0 10 11"><path d="M.8 5L5 1.2L9.2 5M.8 9.8L5 6L9.2 9.8" stroke="#fff" stroke-width="1.5" fill="none"/></svg>
</div></body></html>
